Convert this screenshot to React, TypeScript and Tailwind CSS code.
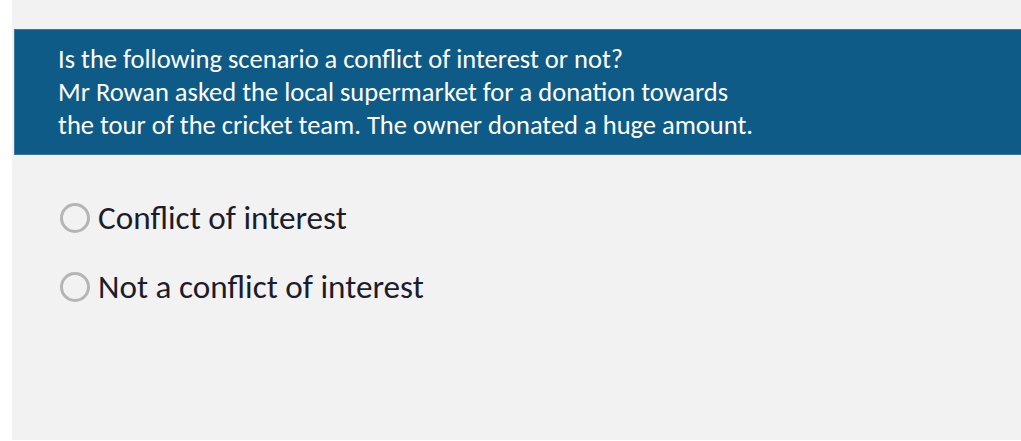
import React from "react";

const font = { fontFamily: "Carlito, 'Open Sans', 'Liberation Sans', sans-serif" };

function Radio({ label }: { label: string }) {
  return (
    <label className="flex items-center h-[34px] cursor-pointer">
      <span className="w-[30px] h-[30px] rounded-full border-[3px] border-[#b5b5b5] bg-[#f2f2f2] shrink-0" />
      <span className="ml-[8px] text-[33.2px] text-[#1c1c2b] leading-none">{label}</span>
    </label>
  );
}

export default function App() {
  return (
    <div className="w-[1021px] h-[441px] bg-white flex" style={font}>
      <div className="ml-[12px] flex-1 h-[440px] bg-[#f2f2f2] pt-[29px]">
        <div className="ml-[2px] h-[126px] bg-[#0f5b87] border border-[#3a77a0] border-r-0 pl-[43px] pt-[13px] text-white text-[26.5px] leading-[33px]">
          <div>Is the following scenario a conflict of interest or not?</div>
          <div>Mr Rowan asked the local supermarket for a donation towards</div>
          <div>the tour of the cricket team. The owner donated a huge amount.</div>
        </div>
        <div className="pl-[48px] pt-[46px] flex flex-col gap-[35px]">
          <Radio label="Conflict of interest" />
          <Radio label="Not a conflict of interest" />
        </div>
      </div>
    </div>
  );
}
